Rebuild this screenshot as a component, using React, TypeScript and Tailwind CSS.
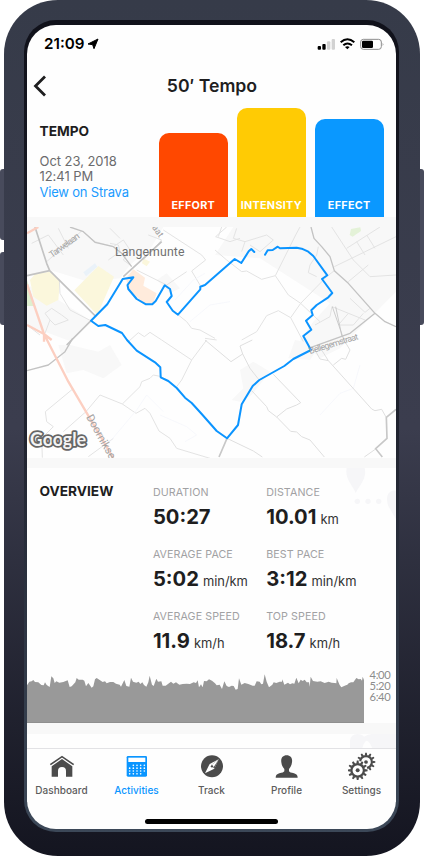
import React from "react";

const stats = [
  ["DURATION", "50:27", ""],
  ["DISTANCE", "10.01", "km"],
  ["AVERAGE PACE", "5:02", "min/km"],
  ["BEST PACE", "3:12", "min/km"],
  ["AVERAGE SPEED", "11.9", "km/h"],
  ["TOP SPEED", "18.7", "km/h"],
];

function StatusBar() {
  return (
    <div className="flex h-[37px] shrink-0 items-center justify-between pl-[17px] pr-[10px]">
      <div className="flex items-center gap-[3px] text-[15.2px] font-semibold leading-5 text-black">
        <span>21:09</span>
        <svg className="h-3 w-3" viewBox="0 0 36 36"><path d="M33 3 21 32 17 20 3 18Z" stroke="#000" strokeWidth="3" strokeLinejoin="round" /></svg>
      </div>
      <svg className="h-[14px] w-[70px]" viewBox="312 108 210 42">
        <rect x="317" y="135" width="10" height="11" rx="3" />
        <rect x="331" y="129" width="10" height="17" rx="3" />
        <rect x="345" y="121" width="10" height="25" rx="3" fill="#d2d2d2" />
        <rect x="359" y="114" width="10" height="32" rx="3" fill="#d2d2d2" />
        <g fill="none" stroke="#000" strokeWidth="6"><path d="M386 124Q406 106 427 124" /><path d="M394 133Q406 122 420 133" /></g>
        <path d="M399 138Q406 133 413 138L406 145Z" />
        <rect x="446" y="115" width="62" height="30" rx="8" fill="none" stroke="#8c8c8c" strokeWidth="3" />
        <rect x="450" y="119" width="33" height="22" rx="4" />
        <path d="M512 125Q517 130 512 135Z" fill="#8c8c8c" />
      </svg>
    </div>
  );
}

function Bar({ label, tone }: { label: string; tone: string }) {
  return (
    <div className={"flex w-[68.5px] items-end justify-center rounded-t-[10px] pb-[3px] text-[10.8px] font-bold leading-4 tracking-[0.3px] text-white " + tone}>
      {label}
    </div>
  );
}

function RouteMap() {
  return (
    <svg className="block h-[231px] w-[369px] shrink-0 bg-[#fefefe]" viewBox="27 227 369 231">
      <g transform="translate(20 225) scale(.33333)" strokeLinejoin="round">
        <path d="M21 6H430L395 65 330 120 300 160 205 170 90 135 21 155ZM100 215 210 285 155 350 21 300V180ZM410 165 440 145 480 190 450 205Z" fill="#f8f8f8" />
        <path d="M585 90 720 100 930 235 880 290 840 345 900 400 960 370 1128 200V6H640Z" fill="#f8f8f8" />
        <path d="M115 360 140 445 190 435 250 460 305 420 270 360 235 380 150 360Z" fill="#f8f8f8" />
        <path d="M825 345 805 400 870 405 900 360ZM660 435 700 410 750 440 695 510 660 530 635 525 670 490Z" fill="#f8f8f8" />
        <path d="M45 147 90 140 120 165 115 225 80 242 40 215 30 165ZM163 196 235 123 282 155 232 270Z" fill="#fbf7dc" />
        <path d="M370 100 390 110 380 124 366 115Z" fill="#fbf7dc" />
        <path d="M340 133 375 158 370 182 410 205 398 238 374 237 325 193 318 160Z" fill="#ffebdc" />
        <path d="M21 165 45 243H21Z" fill="#deefd0" />
        <path d="M190 142 225 115 232 125 198 154Z" fill="#eaf2f9" />
        <path d="M993 12 1021 7 1023 18 998 35 989 30Z" fill="#e4f2d8" />
        <g fill="none" stroke="#e3e3e3" strokeWidth="3">
          <path d="M80 110 185 18M35 55 85 30 130 90M115 10 145 70M190 20 225 50 280 65 310 45 330 75 310 105 330 120M265 105 300 80 295 60 270 55M270 10 300 40M385 30 425 45 370 105M350 135 440 180 500 140" />
          <path d="M430 15 545 90 557 105 515 138 541 182M118 165 120 205 150 255 210 286M21 300 60 330M75 325 90 285 75 265 95 250 125 270 145 285 105 300 90 285M585 75 620 105 665 140 680 138 725 163 766 152 827 30 840 6M766 152 805 210 842 235 900 290" />
          <path d="M842 235 812 278 775 257 740 272 710 320 665 345M812 278 850 350M842 235 920 155 943 137M587 35 620 6M587 35 630 50 660 40M605 6 595 35M650 10 640 40 675 50 665 80M675 50 740 30 760 45 720 80 690 60M895 65 890 90 870 120 865 143 890 155M590 345 555 340" />
          <path d="M943 125 1128 35M935 6 1000 105 1050 155 1128 150M980 70 1080 6M1010 50 1035 90M1040 30 1065 70M985 170 1045 120M990 220 1035 262 1050 250M936 245 930 275 885 300M936 245 1035 285M960 300 1000 300 1030 265M985 265 955 300" />
          <path d="M475 270 500 290 515 310 540 315 585 340M325 350 355 323 373 335 390 322 425 345 515 405 560 345M515 405 485 465 470 485M198 560 240 510 307 537 348 565 375 550 390 565 417 618 450 640 470 670 570 700M307 537 360 485 365 470 390 460 400 450 425 455M157 493 76 560 80 590 100 605 65 640 67 698M205 695 280 640M198 560 130 620" />
        </g>
        <g fill="none" stroke="#c3c3c3">
          <path d="M45 6 80 115 89 137 228 275M140 360 213 287M310 155 425 50M21 152 89 137" strokeWidth="5" />
          <path d="M150 6 190 20 225 52 280 65 305 85 335 125M21 437 85 420 135 380 158 340" strokeWidth="4" />
          <path d="M873 6 882 40 905 65 930 95 943 137 985 175 1065 265 1095 290 1128 305M1065 265 990 325 865 370" strokeWidth="4" />
          <path d="M937 245 970 340M947 245 966 335" strokeWidth="2.5" />
        </g>
        <path d="M21 25 55 6M21 178 72 327 145 470 280 700M21 300 72 327 95 345M72 327V350" fill="none" stroke="#fccfc1" strokeWidth="7" />
        <path d="M465 225 520 165 555 145M630 230 570 240 510 290M430 560 380 510 350 555 270 650M420 570 500 605 530 630 495 650M900 570 960 505 1000 490 1020 420" fill="none" stroke="#f3f5fb" strokeWidth="2" />
      </g>
      <g transform="translate(205 340) scale(.33333)" fill="none" stroke="#dfdfdf" strokeWidth="3">
        <path d="M0 0 78 65 113 42 105 18 142 0M113 42 135 85 160 117M205 103 287 188 275 195 245 207 215 231M140 152 185 200 190 212 215 231 257 274 275 276 290 290 315 300 358 351M66 295 145 333 172 351M330 30 345 57 370 62 500 207 510 212 530 208 543 231M385 75 410 55 422 58 435 30 420 5M478 351 512 327M350 30 370 62" />
        <path d="M66 295 42 351M573 208 544 232 546 295 512 326 532 351" stroke="#c8c8c8" strokeWidth="5" />
      </g>
      <path d="M254.3 252 251.3 249 248.7 251.3 241.3 263 234.7 259 205 285 200.3 286.7V289.3L178 314.7 172.7 310.7 166.7 302 171.7 296 170 289 164.7 285.3 155.7 301 152.3 304.3H146L136.7 299 128.3 289 127.5 285 133.3 277.3 122.7 279 107.3 304.3 91 320.7 98.3 326 105.3 325 122 333 127 340 136.7 350.7 155 362.3 160.3 367.3 160.7 377.3 168.3 381 176.7 388 185 397.7 191.7 403 201.7 414 216.7 431 227 438.3 238 425 241.7 404.3 252.7 386 259.3 380 284.3 366 293.3 359 311 350 303.3 336 311.3 329.7 306 320.7 312.7 315 311.3 310.3 316.7 305 328.3 297.3 332.3 293 322 279 327.3 275.3 313.3 256 308.3 251.7 301.7 248.7 296.7 247.7 280 248.3 277.7 246.7 272.7 250 267.7 250.3 265 254.7" fill="none" stroke="#0b94ff" strokeWidth="2" strokeLinejoin="round" strokeLinecap="round" />
      <g fontFamily="Roboto, sans-serif" fill="#a3a3a3">
        <text x="115" y="256" fontSize="12.3" fill="#707070" textLength="69.5">Langemunte</text>
        <text transform="translate(52 258) rotate(-36)" fontSize="9" textLength="35">Tarwelaan</text>
        <text transform="translate(145.500 219) rotate(54)" fontSize="9">straat</text>
        <text transform="translate(310 354) rotate(-17)" fontSize="8.800" textLength="51">Bellegemstraat</text>
        <text transform="translate(86 417) rotate(61)" fontSize="11" textLength="49">Doornikse</text>
      </g>
      <text x="30" y="446" fontFamily="Lato, sans-serif" fontSize="18" fontWeight="700" fill="#f4f4f4" stroke="#666" strokeWidth="3.6" strokeLinejoin="round" paintOrder="stroke" textLength="56">Google</text>
    </svg>
  );
}

function PaceChart() {
  return (
    <div className="flex h-[58px] shrink-0">
      <svg className="block h-[58px] w-[337px]" viewBox="81 30 1011 174" preserveAspectRatio="none">
        <path d="M81 203V91L88 80 95 79 100 75 105 81 115 82 124 90 131 91 135 82 140 90 149 96 154 64 160 70 164 84 169 79 178 83 190 81 203 76 209 96 215 94 226 82 230 69 236 74 248 74 253 77 258 94 265 84 275 98 280 94 285 73 290 69 299 75 308 81 315 79 320 85 330 81 340 81 348 86 359 89 363 95 373 75 379 93 388 95 393 68 399 80 409 83 416 80 421 87 427 82 432 90 439 95 445 82 449 62 456 89 461 93 469 71 474 80 484 79 488 92 497 92 513 80 520 86 528 82 538 89 548 87 560 86 570 87 581 82 588 84 593 76 597 97 603 88 608 97 612 78 620 79 627 73 636 77 645 85 650 91 659 89 666 102 673 79 680 93 687 96 695 92 701 93 707 104 713 102 717 70 724 89 734 84 745 87 758 92 764 92 770 79 779 80 784 88 789 86 794 58 800 80 807 97 817 89 821 82 829 84 839 80 846 80 847 73 853 89 864 83 870 88 877 85 883 86 889 68 896 85 902 74 908 78 914 74 920 82 927 82 929 95 932 65 939 78 952 80 962 79 974 84 986 80 995 83 1004 84 1009 85 1010 69 1019 90 1024 97 1034 92 1042 89 1046 85 1053 82 1060 82 1069 69 1076 73 1082 72 1086 77 1088 65 1092 75V203Z" fill="#999" />
        <path d="M81 202.500H1092" stroke="#8f8f8f" strokeWidth="3" />
      </svg>
      <div className="flex flex-col pl-[5.5px] pt-[4px] text-[11.2px] leading-[11.2px] tracking-[-0.35px] text-[#8c8c8c] [font-family:Lato,sans-serif]">
        <span>4:00</span><span>5:20</span><span>6:40</span>
      </div>
    </div>
  );
}

const spokes = [0, 30, 60, 90, 120, 150, 180, 210, 240, 270, 300, 330];

function Gear({ x, y, s }: { x: number; y: number; s: number }) {
  return (
    <g transform={`translate(${x} ${y}) scale(${s})`}>
      <circle r="19" fill="none" stroke="#4b4b4b" strokeWidth="7" />
      <circle r="6" />
      {spokes.map((a) => <path key={a} d="M-4-21-2.500-30H2.500L4-21Z" transform={`rotate(${a})`} />)}
    </g>
  );
}

const tabs: { name: string; box: string; icon: React.ReactNode }[] = [
  { name: "Dashboard", box: "144 36 84 84", icon: <g><path d="M151 74 186 50 221 74" fill="none" stroke="#4b4b4b" strokeWidth="5" /><path d="M155 79 186 57 217 79V110H198V93Q198 81 186 81T174 93V110H155Z" /></g> },
  { name: "Activities", box: "369 36 84 84", icon: (
    <g><rect x="380" y="48" width="61" height="62" rx="4" /><rect x="385" y="53" width="51" height="13" fill="#fff" />
      <g fill="#fff">{[0, 1, 2, 3].map((r) => [0, 1, 2, 3, 4].map((c) => (r === 0 && c === 0) || (r === 3 && c > 3) ? null : <circle key={`${r}-${c}`} cx={389 + c * 11} cy={76 + r * 8.5} r="2.500" />))}</g>
    </g>) },
  { name: "Track", box: "594 36 84 84", icon: <g><circle cx="636" cy="79" r="33" /><path d="M656 58 643 86 615 100 629 72Z" fill="#fff" /><path d="M634 75 643 86 656 58Z" fill="#4b4b4b" /><path d="M634 75 641 82 656 58Z" fill="#fff" /><circle cx="636" cy="79" r="3.500" /></g> },
  { name: "Profile", box: "819 36 84 84", icon: <path d="M860 46C848 46 842 55 844 67 845 77 849 83 853 87V94Q851 98 838 100 827 103 827 113H893Q893 103 882 100 869 98 867 94V87C871 83 875 77 876 67 878 55 872 46 860 46Z" /> },
  { name: "Settings", box: "1044 36 84 84", icon: <g><Gear x={1098} y={66} s={0.93} /><circle cx="1073" cy="91" r="29" fill="#fff" /><Gear x={1073} y={91} s={0.99} /></g> },
];

function TabBar() {
  return (
    <nav className="relative -mx-[3px] grid h-[54px] shrink-0 grid-cols-5 border-t border-[#e2e2e5] bg-[#fefefe] pt-[3px]">
      {tabs.map((t) => (
        <div key={t.name} className={"flex flex-col items-center " + (t.name === "Activities" ? "fill-[#0a95ff] text-[#0a95ff]" : "fill-[#4b4b4b] text-[#5c5c5c]")}>
          <svg className="h-7 w-7 shrink-0" viewBox={t.box}>{t.icon}</svg>
          <span className="mt-[3px] text-[10px] font-medium leading-[14px] tracking-[0.03px]">{t.name}</span>
        </div>
      ))}
    </nav>
  );
}

export default function App() {
  return (
    <div className="flex h-[856px] w-[424px] overflow-hidden bg-white font-['Inter','Liberation_Sans',sans-serif]">
      <div className="flex w-1 shrink-0 flex-col gap-3 pt-[169px]">
        <div className="h-[71px] rounded-l-[3px] bg-[#484b5c]" />
        <div className="h-[73px] rounded-l-[3px] bg-[#484b5c]" />
      </div>
      <div className="h-[856px] w-[416px] shrink-0 rounded-[54px] bg-gradient-to-b from-[#363b49] via-[#3b3d4e] via-50% to-[#141520] pl-5 pr-[21px] pt-5">
        <div className="h-[812px] w-[375px] rounded-[32px] bg-gradient-to-b from-[#10111a] via-[#20232f] via-50% to-[#3c4858] px-[3px] pb-[3px] pt-[5px]">
          <main className="flex h-[804px] w-[369px] flex-col overflow-hidden rounded-[29px] bg-[#fefefe] text-[#1e1e1f]">
            <StatusBar />
            <header className="grid h-[46px] shrink-0 grid-cols-[1fr_auto_1fr] items-center pl-[6px] pr-[5px]">
              <svg className="mt-[2px] h-[22px] w-[14px]" viewBox="0 0 14 22"><path d="M12 1.500 2.500 11 12 20.500" fill="none" stroke="#1e1e1f" strokeWidth="2.800" /></svg>
              <h1 className="mt-[2px] text-[17.7px] font-semibold leading-6">50′ Tempo</h1>
            </header>
            <section className="flex h-[109px] shrink-0 items-end pr-3">
              <div className="flex h-full w-[132px] flex-col pl-[12.5px] pt-[14px]">
                <h2 className="text-[13.7px] font-bold leading-[18px]">TEMPO</h2>
                <p className="mt-[13.5px] whitespace-nowrap text-[13px] leading-[15.7px] tracking-[-0.05px] text-[#6b6b6d]">Oct 23, 2018<br />12:41 PM<br /><a className="tracking-[-0.2px] text-[#1a9bff]">View on Strava</a></p>
              </div>
              <div className="flex items-end gap-[9.5px]">
                <Bar label="EFFORT" tone="h-[84px] bg-[#ff4800]" />
                <Bar label="INTENSITY" tone="h-[109px] bg-[#ffcb04]" />
                <Bar label="EFFECT" tone="h-[98px] bg-[#0a98ff]" />
              </div>
            </section>
            <div className="h-[10px] shrink-0 bg-[#f8f8f8]" />
            <RouteMap />
            <div className="h-[10px] shrink-0 bg-[#f8f8f8]" />
            <section className="relative flex h-[197px] shrink-0 pl-[12.5px]">
              <svg className="absolute right-0 top-0 h-[60px] w-[55px]" viewBox="963 24 165 180" fill="#f6f6f8">
                <path d="M980 24H1034C1042 55 1017 78 1007 99 1000 78 973 55 980 24ZM1128 92C1105 88 1095 110 1105 138L1128 178Z" />
                <circle cx="1012" cy="124" r="8" /><circle cx="1044" cy="124" r="8" /><circle cx="1076" cy="124" r="8" />
              </svg>
              <h2 className="w-[113.4px] pt-[14px] text-[13.7px] font-bold leading-[18px]">OVERVIEW</h2>
              <div className="relative grid grid-cols-[113.300px_113px] content-start pt-[17.2px]">
                {stats.map(([label, value, unit]) => (
                  <div key={label} className="h-[61.7px] whitespace-nowrap">
                    <div className="text-[10.7px] leading-4 tracking-[0.08px] text-[#a1a1a3]">{label}</div>
                    <div className="text-[20.2px] font-bold leading-8">{value}{unit && <span className="ml-1 text-[12.9px] font-normal text-[#333]">{unit}</span>}</div>
                  </div>
                ))}
              </div>
            </section>
            <PaceChart />
            <div className="h-[11px] shrink-0 bg-[#f8f8f8]" />
            <div className="flex h-[14px] shrink-0 justify-end">
              <svg className="h-[14px] w-[46px]" viewBox="0 0 138 42"><path d="M0 42V20Q3 0 22 0 36 0 42 8 55 0 65 0H138V42H66Q60 22 50 20 42 22 37 42Z" fill="#f6f6f8" /></svg>
            </div>
            <TabBar />
            <div className="flex grow items-end justify-center pb-[5px]"><div className="h-[5px] w-[133px] rounded-full bg-black" /></div>
          </main>
        </div>
      </div>
      <div className="w-1 shrink-0 pt-[169px]"><div className="h-[156px] rounded-r-[3px] bg-[#484b5c]" /></div>
    </div>
  );
}
